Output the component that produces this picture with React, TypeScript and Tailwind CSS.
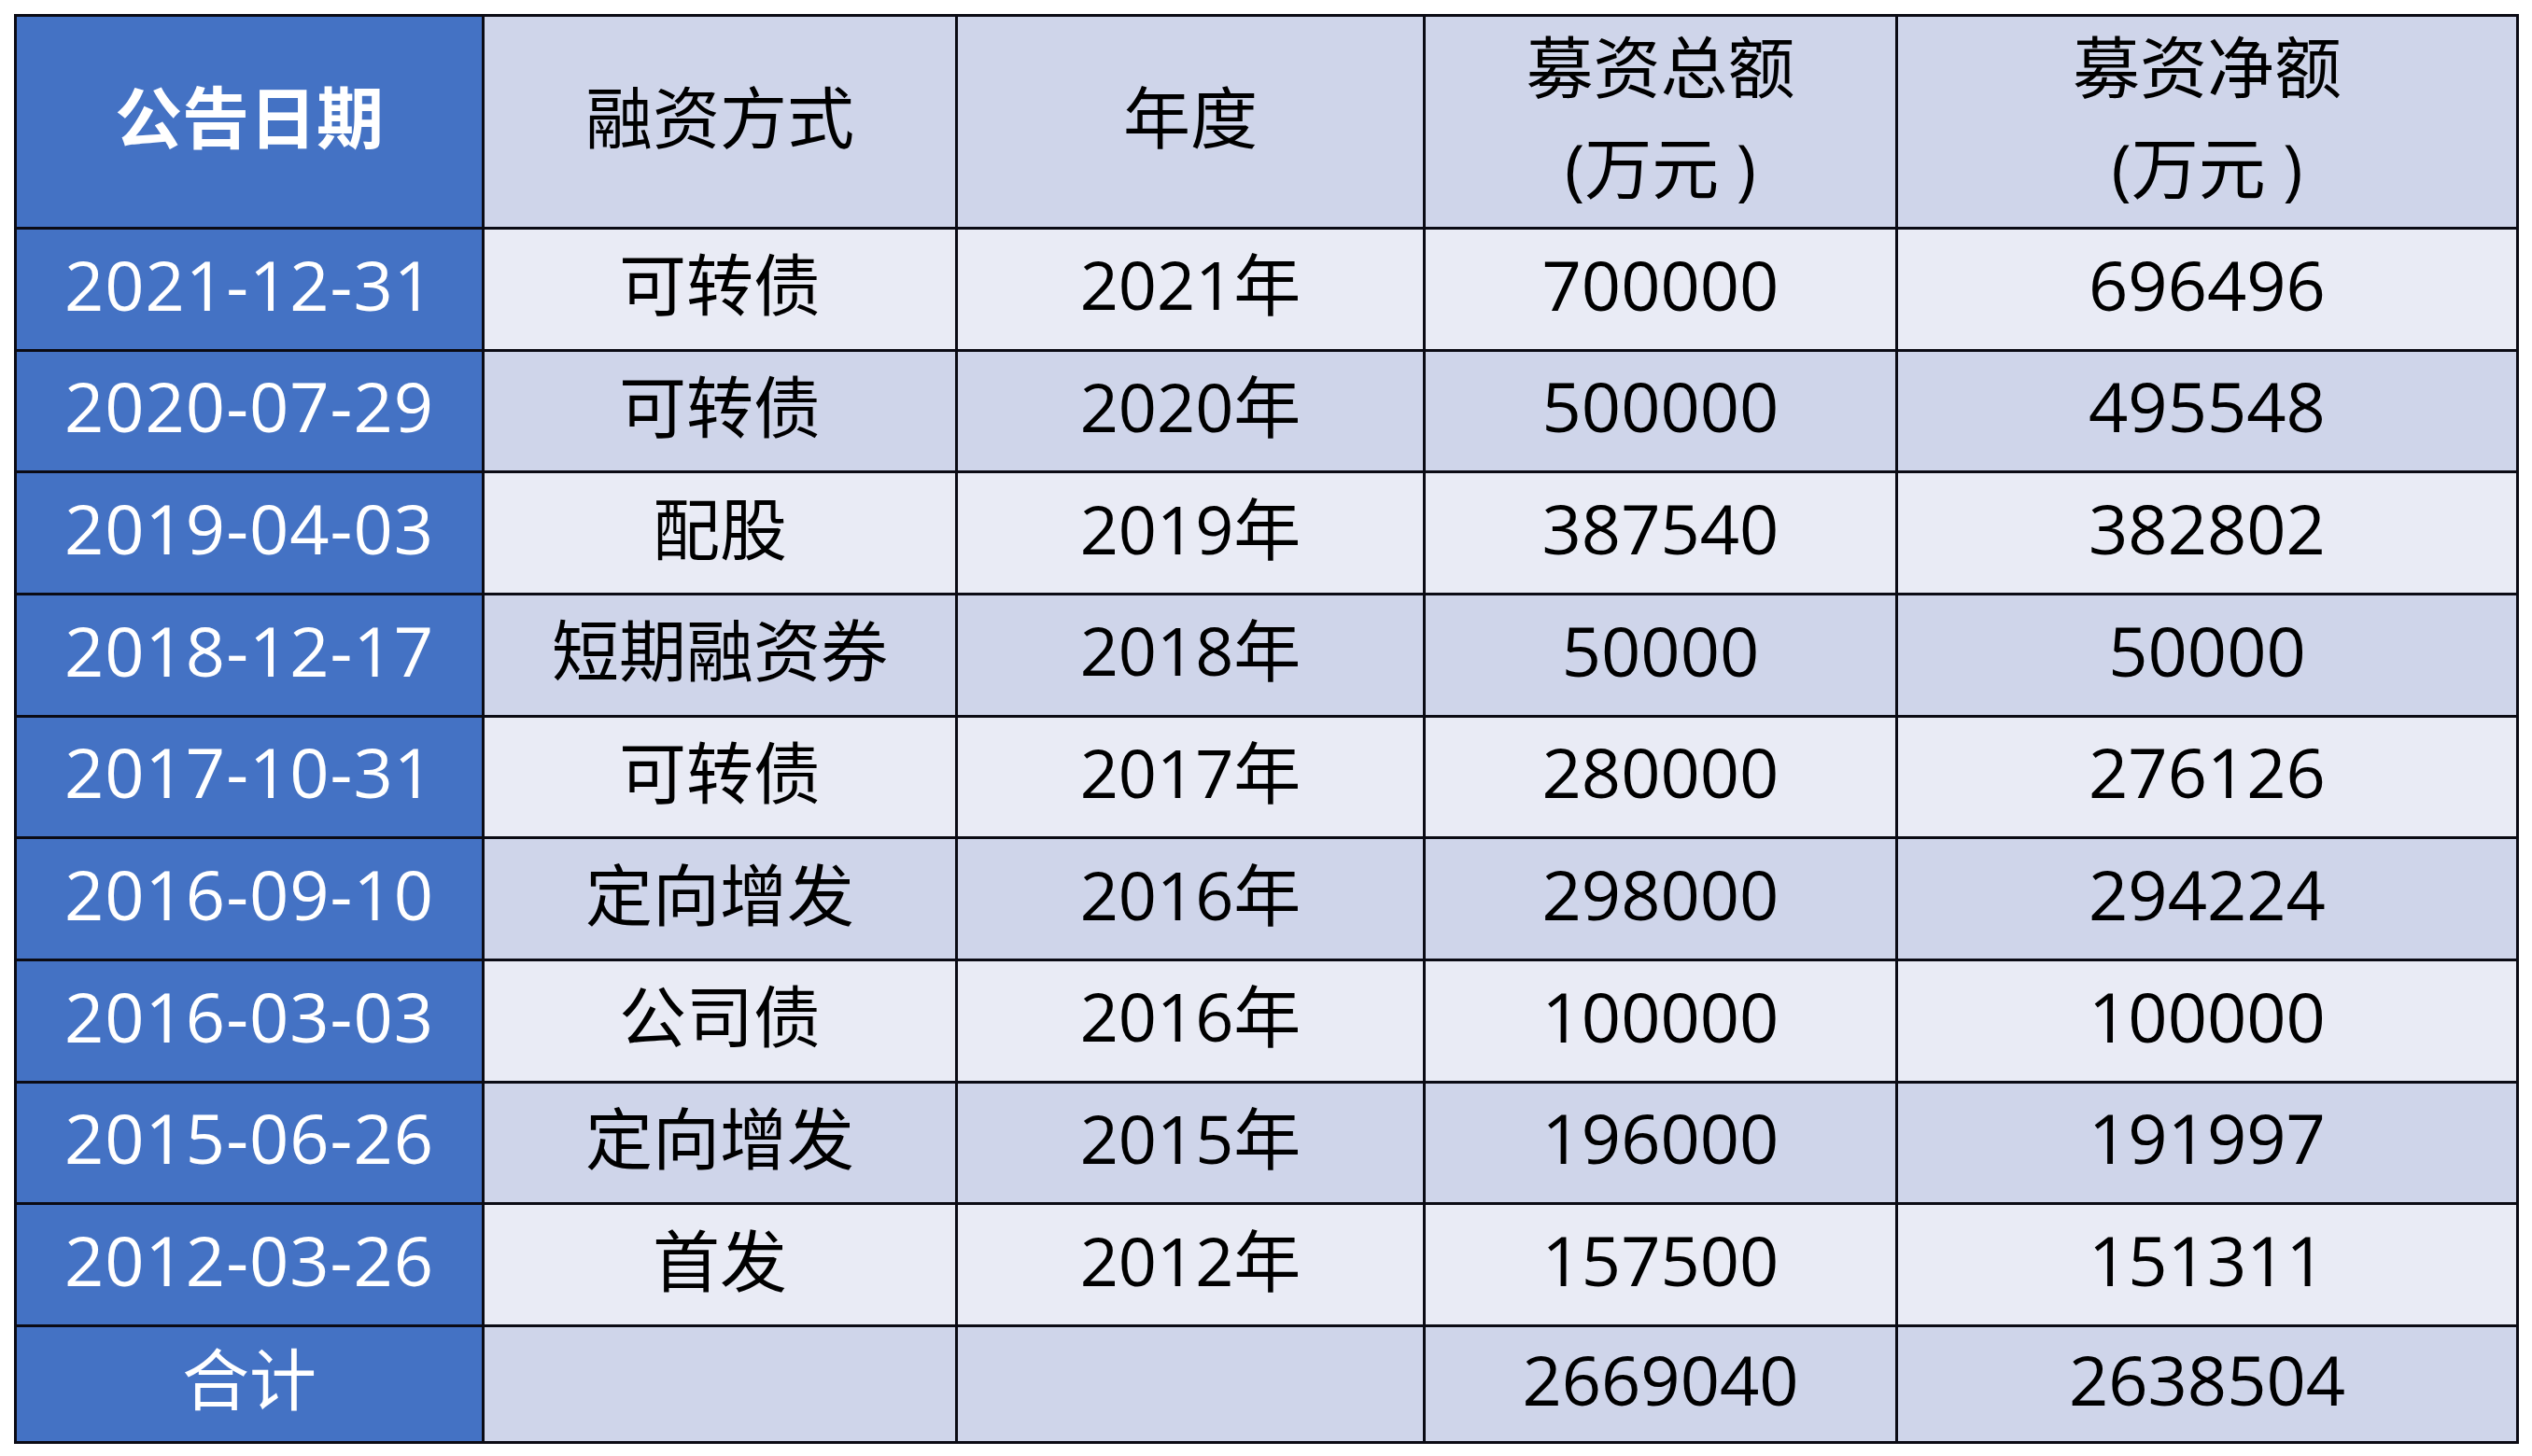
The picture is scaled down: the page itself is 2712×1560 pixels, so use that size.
const rows = [
  ['2021-12-31', '可转债', '2021年', '700000', '696496'],
  ['2020-07-29', '可转债', '2020年', '500000', '495548'],
  ['2019-04-03', '配股', '2019年', '387540', '382802'],
  ['2018-12-17', '短期融资券', '2018年', '50000', '50000'],
  ['2017-10-31', '可转债', '2017年', '280000', '276126'],
  ['2016-09-10', '定向增发', '2016年', '298000', '294224'],
  ['2016-03-03', '公司债', '2016年', '100000', '100000'],
  ['2015-06-26', '定向增发', '2015年', '196000', '191997'],
  ['2012-03-26', '首发', '2012年', '157500', '151311'],
]

const cell = 'flex items-center justify-center border-r-[3px] border-b-[3px] border-[#0b0b14] pb-[11px] text-center'

export default function App() {
  return (
    <div className="min-h-screen w-full bg-white pl-[15px] pt-[15px] font-['Open_Sans','Noto_Sans_CJK_SC',sans-serif] text-[72px] leading-[1.5] text-black">
      <div className="grid w-max grid-cols-[501px_507px_501px_506px_665px] grid-rows-[228px_repeat(9,130.67px)_125px] border-l-[3px] border-t-[3px] border-[#0b0b14]">
        {/* header */}
        <div className={`${cell} bg-[#4472c4] font-bold text-white`}>公告日期</div>
        <div className={`${cell} bg-[#cfd5ea]`}>融资方式</div>
        <div className={`${cell} bg-[#cfd5ea]`}>年度</div>
        <div className={`${cell} flex-col bg-[#cfd5ea]`}>
          <span>募资总额</span>
          <span>(万元 )</span>
        </div>
        <div className={`${cell} flex-col bg-[#cfd5ea]`}>
          <span>募资净额</span>
          <span>(万元 )</span>
        </div>

        {rows.map((r, i) => {
          const bg = i % 2 === 0 ? 'bg-[#e9ebf5]' : 'bg-[#cfd5ea]'
          return [
            <div key={`${i}-0`} className={`${cell} bg-[#4472c4] text-[74px] tracking-[1px] text-white`}>{r[0]}</div>,
            <div key={`${i}-1`} className={`${cell} ${bg}`}>{r[1]}</div>,
            <div key={`${i}-2`} className={`${cell} ${bg}`}>{r[2]}</div>,
            <div key={`${i}-3`} className={`${cell} ${bg} text-[74px]`}>{r[3]}</div>,
            <div key={`${i}-4`} className={`${cell} ${bg} text-[74px]`}>{r[4]}</div>,
          ]
        })}

        {/* totals */}
        <div className={`${cell} bg-[#4472c4] text-white`}>合计</div>
        <div className={`${cell} bg-[#cfd5ea]`} />
        <div className={`${cell} bg-[#cfd5ea]`} />
        <div className={`${cell} bg-[#cfd5ea] text-[74px]`}>2669040</div>
        <div className={`${cell} bg-[#cfd5ea] text-[74px]`}>2638504</div>
      </div>
    </div>
  )
}
